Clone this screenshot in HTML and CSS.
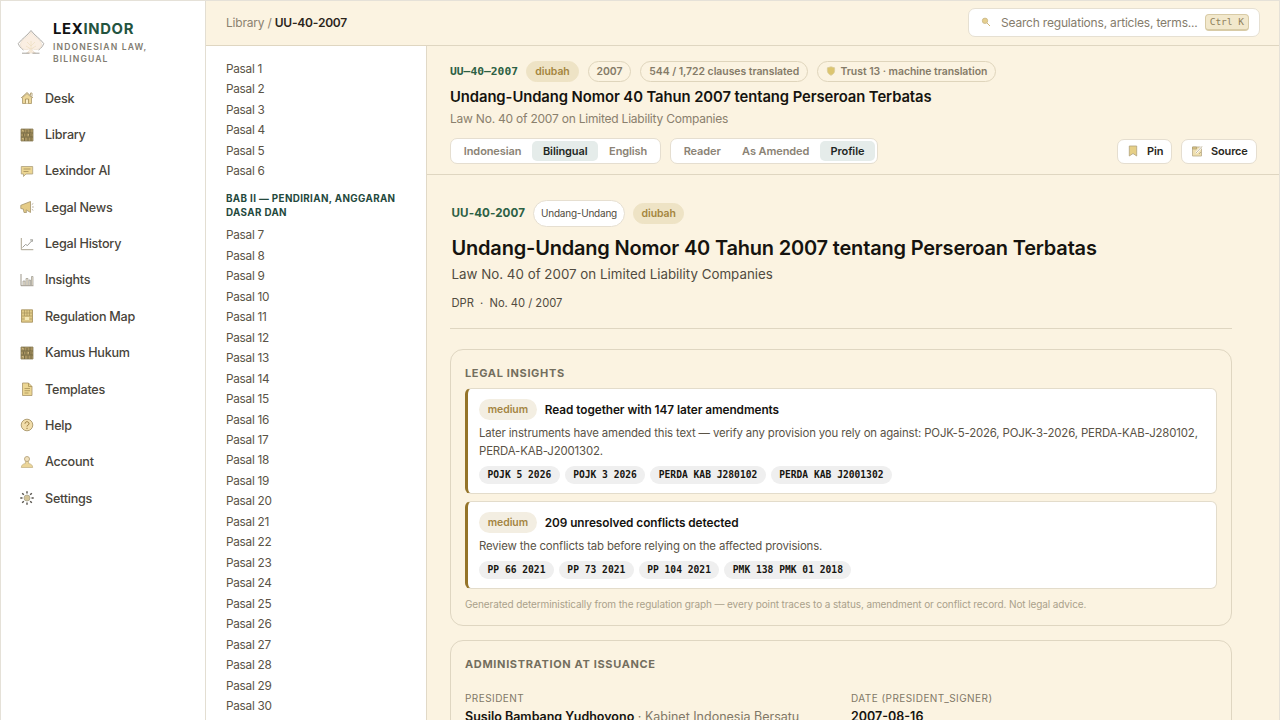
FILE: index.html
```html
<!DOCTYPE html>
<html lang="en">
<head>
<meta charset="utf-8">
<title>UU-40-2007 · Lexindor</title>
<link rel="stylesheet" href="styles.css">
</head>
<body>
<div class="app">
  <aside class="sidebar">
    <div class="brand">
      <svg class="logo" viewBox="0 0 28 28">
        <path d="M14 1.500C10.500 6.500 5 9.500 1.300 14.500c.7 2.500 2.500 4.500 5.200 6.500M14 1.500c3.500 5 9 8 12.700 13-.7 2.500-2.500 4.500-5.200 6.500" fill="none" stroke="#a5a09a" stroke-width=".9"/>
        <path d="M14 3C11 8 3.500 11 3.500 15.500c0 4.500 5.500 6.500 9.500 4 0 2-1.500 3.300-3.500 4.500h9c-2-1.200-3.500-2.500-3.500-4.500 4 2.500 9.500.5 9.500-4C24.500 11 17 8 14 3z" fill="#faeee2" stroke="#ead9c4" stroke-width=".6"/>
        <path d="M14 12v11M14 17l-4-4M14 17l4-4M14 20l-5-3M14 20l5-3" fill="none" stroke="#efdfc4" stroke-width=".8"/>
        <path d="M5 24.200h7.500M15.500 24.200h7" stroke="#9d9a93" stroke-width=".9"/>
      </svg>
      <div>
        <div class="wordmark">LEX<span>INDOR</span></div>
        <div class="tagline">INDONESIAN LAW,<br>BILINGUAL</div>
      </div>
    </div>
    <nav class="nav">
      <a><svg viewBox="0 0 14 14"><path d="M1 7L7 1.500 13 7M10.500 4V2h1.500v3.500" fill="none" stroke="#b7a67c"/><path d="M2.500 6.500L7 2.500l4.500 4v6h-9z" fill="#ecd699" stroke="#aa9768" stroke-width=".8"/><path d="M5.500 12.500V8h3v4.500" fill="#fbf0cd" stroke="#a28c55" stroke-width=".8"/></svg>Desk</a>
      <a><svg viewBox="0 0 14 14"><use href="#books"/></svg>Library</a>
      <a><svg viewBox="0 0 14 14"><path d="M1.300 2.500h11.400v7.500H6l-2.500 2.500V10H1.300z" fill="#ecd693" stroke="#ada07c" stroke-width=".8"/><path d="M3.500 5h7M3.500 7.500h5" stroke="#a28c55" stroke-width=".8"/></svg>Lexindor AI</a>
      <a><svg viewBox="0 0 14 14"><path d="M.8 5.300L10.500 1.500v11L6 9.800l.5 2.700H4L3.300 9 .8 8.500z" fill="#e5cc88" stroke="#a4946c" stroke-width=".8"/><path d="M11.800 4.500l1.500-1M12 7h1.800M11.800 9.300l1.500 1" stroke="#aaa08a" stroke-width=".8"/></svg>Legal News</a>
      <a><svg viewBox="0 0 14 14"><path d="M1.300 1v11.700h12" fill="none" stroke="#aaa38f"/><path d="M2.500 10.500l3-3 2 1L12 3.500M10 3l2.500-.3L12 5" fill="none" stroke="#87867f" stroke-width=".8"/></svg>Legal History</a>
      <a><svg viewBox="0 0 14 14"><path d="M1 1v11.700h12.500" fill="none" stroke="#9d978a"/><path d="M3 12V8h2v4M6 12V5.500h2V12M9 12V7h1.500v5M11.500 12V3.500H13V12" fill="#f0e7d4" stroke="#99968d" stroke-width=".7"/></svg>Insights</a>
      <a><svg viewBox="0 0 14 14"><path d="M1.500.8h11v12.400h-11z" fill="#dfc987" stroke="#a28c55" stroke-width=".8"/><path d="M2 4h10M2 7h10M2 10h2.500M9.500 10H12M4.500 1v6M7 1v6M9.500 1v6" stroke="#a8935c" stroke-width=".7"/><path d="M5 8h4v3H5z" fill="#f5e8b8"/></svg>Regulation Map</a>
      <a><svg viewBox="0 0 14 14"><use href="#books"/></svg>Kamus Hukum</a>
      <a><svg viewBox="0 0 14 14"><path d="M2.500 1h6l3.500 3.500v9H2.500z" fill="#ecd693" stroke="#a99669" stroke-width=".8"/><path d="M8.500 1v3.500H12M4.500 6.500h5.500M4.500 8.700h5.500M4.500 11h4" fill="none" stroke="#a99255" stroke-width=".8"/></svg>Templates</a>
      <a><svg viewBox="0 0 14 14"><circle cx="7" cy="7" r="5.800" fill="#f1ddaa" stroke="#a99669" stroke-width=".9"/><path d="M5 5.700c0-2.600 4-2.600 4 0C9 7.200 7 7 7 8.500M7 9.800v1.200" fill="none" stroke="#95763a" stroke-width="1"/></svg>Help</a>
      <a><svg viewBox="0 0 14 14"><path d="M5.300 6.500h3.400L8.500 8.500c2.500.3 4 1.500 4.200 4H1.300c.2-2.500 1.700-3.700 4.200-4z" fill="#ebd599" stroke="#c0ad7e" stroke-width=".7"/><circle cx="7" cy="4" r="2.500" fill="#f1e1bc" stroke="#b5a37a" stroke-width=".9"/></svg>Account</a>
      <a><svg viewBox="0 0 14 14"><path d="M7 .3v2.200M7 11.500v2.200M.3 7h2.200M11.500 7h2.200M2.200 2.200l1.600 1.600M10.200 10.200l1.600 1.600M2.200 11.800l1.600-1.600M10.200 3.800l1.600-1.600" stroke="#55524b" stroke-width="1.400"/><circle cx="7" cy="7" r="3" fill="#d3c498" stroke="#a9a48e" stroke-width=".8"/></svg>Settings</a>
    </nav>
  </aside>
  <div class="workspace">
    <header class="topbar">
      <div class="crumbs">Library / <b>UU-40-2007</b></div>
      <div class="search">
        <svg viewBox="0 0 10 10"><circle cx="4" cy="3.800" r="2.700" fill="#e6cf8e" stroke="#c9b78a" stroke-width=".8"/><path d="M6 6l3 3" stroke="#d1b878" stroke-width="1"/></svg>
        <span class="hint">Search regulations, articles, terms...</span><kbd>Ctrl K</kbd>
      </div>
    </header>
    <div class="reader">
      <aside class="toc">
        <a>Pasal 1</a><a>Pasal 2</a><a>Pasal 3</a><a>Pasal 4</a><a>Pasal 5</a><a>Pasal 6</a>
        <h4>BAB II — PENDIRIAN, ANGGARAN DASAR DAN</h4>
        <a>Pasal 7</a><a>Pasal 8</a><a>Pasal 9</a><a>Pasal 10</a><a>Pasal 11</a><a>Pasal 12</a><a>Pasal 13</a><a>Pasal 14</a><a>Pasal 15</a><a>Pasal 16</a><a>Pasal 17</a><a>Pasal 18</a><a>Pasal 19</a><a>Pasal 20</a><a>Pasal 21</a><a>Pasal 22</a><a>Pasal 23</a><a>Pasal 24</a><a>Pasal 25</a><a>Pasal 26</a><a>Pasal 27</a><a>Pasal 28</a><a>Pasal 29</a><a>Pasal 30</a>
      </aside>
      <main class="content">
        <section class="dochead">
          <div class="meta">
            <span class="code">UU–40–2007</span>
            <span class="pill gold">diubah</span>
            <span class="pill">2007</span>
            <span class="pill">544 / 1,722 clauses translated</span>
            <span class="pill trust"><svg viewBox="0 0 10 10"><path d="M5 .8l3.600 1v3C8.600 7 7 8.500 5 9.300 3 8.500 1.400 7 1.400 4.800v-3z" fill="#dcc56f" stroke="#d9cc9c" stroke-width=".8"/></svg>Trust 13 · machine translation</span>
          </div>
          <h2>Undang-Undang Nomor 40 Tahun 2007 tentang Perseroan Terbatas</h2>
          <p class="en">Law No. 40 of 2007 on Limited Liability Companies</p>
          <div class="tools">
            <div class="seg lang"><span>Indonesian</span><span class="on">Bilingual</span><span>English</span></div>
            <div class="seg view"><span>Reader</span><span>As Amended</span><span class="on">Profile</span></div>
            <div class="btn pin"><svg viewBox="0 0 12 12"><path d="M2.300 1h7.400v10L6 8.500 2.300 11z" fill="#e6cf86" stroke="#b0a27c" stroke-width=".8"/></svg>Pin</div>
            <div class="btn source"><svg viewBox="0 0 12 12"><path d="M1.500 2h9v9h-9z" fill="#efdfae" stroke="#b7a987" stroke-width=".8"/><path d="M1.500 2h4v2h-4zM8 9l2-2" fill="#e0c880" stroke="#a99b76" stroke-width=".7"/><path d="M5 8L10.500 2" stroke="#fff" stroke-width="2"/><path d="M5 8L11 1.500" stroke="#a99b76" stroke-width=".7"/></svg>Source</div>
          </div>
        </section>
        <div class="profile">
          <section class="intro">
            <div class="tags"><span class="id">UU-40-2007</span><span class="kind">Undang-Undang</span><span class="pill gold">diubah</span></div>
            <h1>Undang-Undang Nomor 40 Tahun 2007 tentang Perseroan Terbatas</h1>
            <p class="subtitle">Law No. 40 of 2007 on Limited Liability Companies</p>
            <p class="issuer">DPR &nbsp;·&nbsp; No. 40 / 2007</p>
          </section>
          <section class="card">
            <h3>LEGAL INSIGHTS</h3>
            <article class="insight">
              <div class="title"><span class="level">medium</span><b>Read together with 147 later amendments</b></div>
              <p>Later instruments have amended this text — verify any provision you rely on against: POJK-5-2026, POJK-3-2026, PERDA-KAB-J280102, PERDA-KAB-J2001302.</p>
              <div class="refs"><span>POJK 5 2026</span><span>POJK 3 2026</span><span>PERDA KAB J280102</span><span>PERDA KAB J2001302</span></div>
            </article>
            <article class="insight">
              <div class="title"><span class="level">medium</span><b>209 unresolved conflicts detected</b></div>
              <p>Review the conflicts tab before relying on the affected provisions.</p>
              <div class="refs"><span>PP 66 2021</span><span>PP 73 2021</span><span>PP 104 2021</span><span>PMK 138 PMK 01 2018</span></div>
            </article>
            <p class="note">Generated deterministically from the regulation graph — every point traces to a status, amendment or conflict record. Not legal advice.</p>
          </section>
          <section class="card">
            <h3>ADMINISTRATION AT ISSUANCE</h3>
            <dl class="facts">
              <div><dt>PRESIDENT</dt><dd><b>Susilo Bambang Yudhoyono</b> · Kabinet Indonesia Bersatu</dd></div>
              <div><dt>DATE (PRESIDENT_SIGNER)</dt><dd><b>2007-08-16</b></dd></div>
            </dl>
          </section>
        </div>
      </main>
    </div>
  </div>
</div>
<svg class="defs"><defs><g id="books"><path d="M1 1h12v12H1z" fill="#a89360" stroke="#8c7d58" stroke-width=".8"/><path d="M1 5h12M1 9h12M4 1v4M7 2v3M10 1v4M3.500 5.500v3M6 5.500v3M9.500 5.500v3M11 6v3M4.500 9.500V13M8 9.500V13M11 9.500V13" stroke="#6c623f" stroke-width=".8"/><path d="M2 2h1.500v2.500M8 6h1v2.500M2 10h1.500v2.500" fill="#dcc68e"/></g></defs></svg>
</body>
</html>
```
FILE: styles.css
```css
* { box-sizing: border-box; margin: 0; padding: 0; }
body { width: 1280px; height: 720px; overflow: hidden; background: #fbf3e1; color: #15130f; font-family: Inter, sans-serif; font-size: 12px; }
.defs { display: none; }
.app { display: flex; width: 1280px; height: 720px; overflow: hidden; border: 1px solid #e5e1d8; border-bottom: 0; white-space: nowrap; }
svg { flex: none; }

.sidebar { width: 205px; flex: none; background: #fff; border-right: 1px solid #e3ded2; }
.brand { display: flex; padding: 18.500px 0 0 16px; height: 79px; gap: 8px; }
.logo { width: 28px; height: 28px; margin-top: 9.500px; }
.wordmark { font-size: 14.800px; line-height: 18px; font-weight: 700; letter-spacing: .7px; color: #111; }
.wordmark span { color: #245440; }
.tagline { margin-top: 3px; font-size: 8.600px; line-height: 12.500px; font-weight: 600; letter-spacing: 1.120px; color: #817c71; }
.nav a { display: flex; align-items: center; gap: 11px; height: 36.360px; padding-left: 19px; font-size: 12.600px; font-weight: 500; letter-spacing: -.25px; color: #48443a; }
.nav svg { width: 14px; height: 14px; }

.workspace { flex: 1; min-width: 0; display: flex; flex-direction: column; }
.topbar { height: 45px; flex: none; display: flex; align-items: center; justify-content: space-between; padding: 0 19px 2px 20px; border-bottom: 1px solid #dfd6c1; }
.crumbs { font-size: 12px; letter-spacing: -.21px; color: #8b8270; }
.crumbs b { font-weight: 600; color: #2b251c; }
.search { display: flex; align-items: center; width: 292px; height: 29px; padding: 0 10px 0 12px; background: #fff; border: 1px solid #e6e0d2; border-radius: 7px; }
.search svg { width: 10px; height: 10px; }
.hint { flex: 1; margin-left: 10px; padding-top: 1px; font-size: 12px; letter-spacing: -.19px; color: #857c6b; }
kbd { height: 17px; padding: 0 4px; border: 1px solid #d8cba6; border-bottom-width: 2px; border-radius: 4px; background: #f2e8cc; color: #8f815c; font: 9.500px/14px "DejaVu Sans Mono", monospace; }
.reader { flex: 1; min-height: 0; display: flex; }

.toc { width: 221px; flex: none; padding: 13px 19px 0 20px; background: #fff; border-right: 1px solid #e1d9c7; overflow: hidden; }
.toc a { display: block; height: 20.470px; line-height: 20.470px; font-size: 11.800px; letter-spacing: -.28px; color: #5a5346; }
.toc h4 { margin: 10.500px 0 5px; font-size: 9.800px; line-height: 14px; font-weight: 700; letter-spacing: .37px; color: #24493d; white-space: normal; }

.content { flex: 1; min-width: 0; overflow: hidden; }
.dochead { height: 129px; padding: 14px 22px 0 23px; border-bottom: 1px solid #dfd6c1; }
.meta { display: flex; align-items: center; gap: 8.800px; height: 22px; }
.code { width: 67.500px; font: bold 11.300px "DejaVu Sans Mono", monospace; color: #2c6044; }
.pill { display: flex; align-items: center; height: 21px; padding: 0 8px; border: 1px solid #dfd5bc; border-radius: 11px; font-size: 10.450px; font-weight: 600; letter-spacing: -.04px; color: #857b68; }
.pill.gold { background: #eee3c5; border-color: #eee3c5; color: #a4853d; }
.trust svg { width: 10px; height: 10px; margin-right: 4.500px; }
.dochead h2 { margin-top: 5px; font-size: 14.800px; line-height: 20px; font-weight: 600; letter-spacing: -.07px; }
.en { margin-top: 4px; font-size: 12px; line-height: 16px; letter-spacing: -.22px; color: #8a806d; }
.tools { display: flex; align-items: center; margin-top: 11px; height: 26px; gap: 9px; }
.seg { display: flex; height: 26px; padding: 2px; background: #fff; border: 1px solid #e5ded0; border-radius: 7px; font-size: 11px; font-weight: 600; letter-spacing: -.1px; color: #8b8375; }
.seg span { display: flex; flex: auto; align-items: center; justify-content: center; padding: 0 10px; border-radius: 5px; }
.seg .on { background: #e5ecea; color: #1e2724; }
.lang { width: 211px; }
.view { width: 208px; }
.btn { display: flex; align-items: center; height: 25px; background: #fff; border: 1px solid #e5ded0; border-radius: 7px; padding-left: 9px; gap: 8px; font-size: 11px; font-weight: 600; letter-spacing: -.15px; color: #2a2721; }
.btn svg { width: 12px; height: 12px; }
.pin { width: 55px; margin-left: auto; }
.source { width: 76px; }

.profile { width: 805px; padding: 24px 0 0 22.500px; }
.intro { height: 130px; padding-left: 2px; border-bottom: 1px solid #dfd6c1; }
.tags { display: flex; align-items: center; height: 28px; gap: 8px; }
.id { font-size: 11.600px; font-weight: 700; letter-spacing: .08px; color: #2c6044; }
.kind { display: flex; align-items: center; height: 27px; padding: 0 7px; background: #fff; border: 1px solid #e6dfd1; border-radius: 14px; font-size: 10px; letter-spacing: -.22px; color: #514b40; }
.tags .pill { padding: 0 7.500px; }
.intro h1 { margin-top: 8px; font-size: 20px; line-height: 26px; font-weight: 600; letter-spacing: -.19px; }
.subtitle { margin-top: 4px; font-size: 13.350px; line-height: 18px; color: #514b40; }
.issuer { margin-top: 11.500px; font-size: 11.200px; line-height: 16px; letter-spacing: -.03px; color: #514b40; }

.card { margin-top: 20px; padding: 15px 14px 13.500px 14.500px; border: 1px solid #dfd6c1; border-radius: 13px; }
.card + .card { margin-top: 14px; height: 150px; }
.card h3 { font-size: 11px; line-height: 16px; font-weight: 700; letter-spacing: .65px; color: #736e5e; }
.insight { margin-top: 7.500px; padding: 10px 11px 8.500px; background: #fff; border: 1px solid #e3dccb; border-left: 3px solid #957429; border-radius: 6px; }
.card h3 + .insight { margin-top: 7px; }
.title { display: flex; align-items: center; height: 21px; gap: 8px; }
.title b { font-size: 11.800px; font-weight: 600; letter-spacing: -.05px; }
.level { display: flex; align-items: center; height: 21px; padding: 0 8.700px; border-radius: 11px; background: #f3eee2; font-size: 10.450px; font-weight: 600; letter-spacing: -.04px; color: #a48543; }
.insight p { margin-top: 4px; font-size: 11.400px; line-height: 18px; letter-spacing: -.14px; color: #5a5346; white-space: normal; }
.refs { display: flex; gap: 4.900px; margin-top: 6px; }
.refs span { height: 18px; line-height: 18px; padding: 0 8.500px; border-radius: 9px; background: #efefef; font-family: "DejaVu Sans Mono", monospace; font-weight: 700; font-size: 9.650px; color: #17150f; }
.note { margin-top: 8.500px; font-size: 10px; line-height: 14px; letter-spacing: -.11px; color: #aaa18b; }
.facts { display: grid; grid-template-columns: 1fr 1fr; gap: 20px; margin-top: 19px; }
.facts dt { font-size: 10px; line-height: 14px; letter-spacing: .45px; color: #817867; }
.facts dd { margin-top: 3.500px; font-size: 12.500px; line-height: 18px; color: #817867; }
.facts b { font-weight: 600; color: #15130f; }
```
